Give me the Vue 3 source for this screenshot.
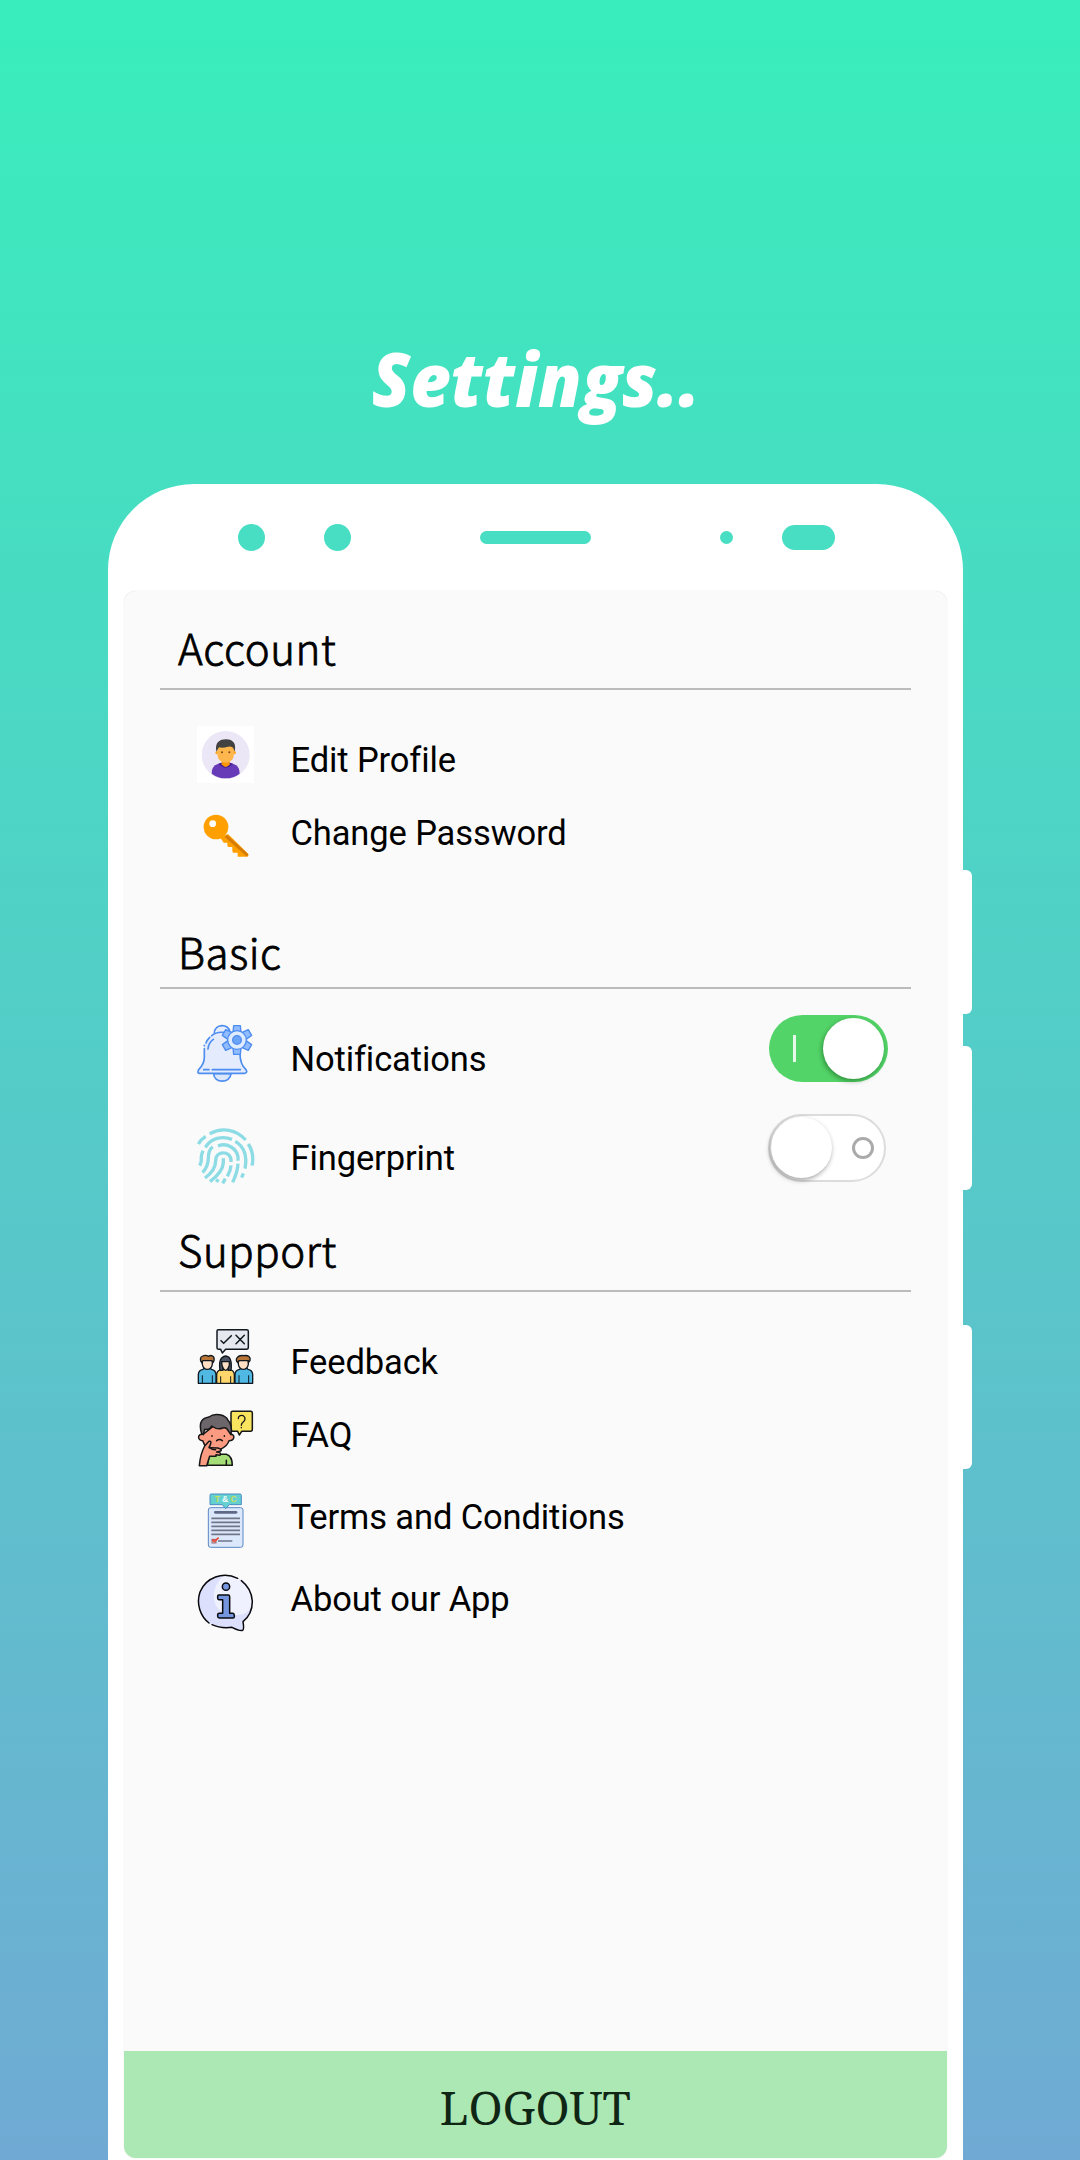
<script setup>
import { ref } from 'vue'

const notifications = ref(true)
const fingerprint = ref(false)
</script>

<template>
  <main class="page">
    <header class="title"><h1>Settings..</h1></header>
    <div class="phone">
      <i class="side-key key-one"></i>
      <i class="side-key key-two"></i>
      <i class="side-key key-three"></i>
      <div class="bezel">
        <i class="lens"></i>
        <i class="lens second"></i>
        <i class="speaker"></i>
        <i class="dot"></i>
        <i class="sensor"></i>
      </div>
      <div class="screen">
        <section class="account">
          <h2><span>Account</span></h2>
          <div class="row edit">
            <svg class="icon" viewBox="0 0 171 171">
              <rect width="171" height="171" fill="#fff" />
              <circle cx="86" cy="87" r="72" fill="#ece7f6" />
              <path d="M44 143C44 119 58 111 86 111S128 119 128 143Q110 157 86 157T44 143Z" fill="#673ab7" />
              <path d="M64 113Q86 137 108 113L100 110H72Z" fill="#4a2392" />
              <path d="M74 104H98V115Q86 131 74 115Z" fill="#ff9800" />
              <circle cx="60" cy="80" r="5" fill="#ffa726" />
              <circle cx="112" cy="80" r="5" fill="#ffa726" />
              <path d="M61 62Q86 48 111 62V84Q110 109 86 110Q62 109 61 84Z" fill="#ffb74d" />
              <path d="M58 77C53 49 68 40 87 40C109 40 119 54 113 77L109 67Q105 59 93 62Q77 67 66 64L61 72Z" fill="#424242" />
              <circle cx="75" cy="79" r="3" fill="#784719" />
              <circle cx="97" cy="79" r="3" fill="#784719" />
            </svg>
            <span class="label">Edit Profile</span>
          </div>
          <div class="row password">
            <svg class="icon" viewBox="0 0 171 171">
              <path d="M70 89L93 78L154 138V144L150 146H122V134H108L106 129V117H93L91 112V104H80Z" fill="#ffa000" />
              <path d="M83 87L90 80L154 139L150 146Z" fill="#d67c05" />
              <circle cx="57" cy="57" r="37" fill="#ffa000" />
              <circle cx="47" cy="47" r="10" fill="#fff" />
            </svg>
            <span class="label">Change Password</span>
          </div>
        </section>

        <section class="basic">
          <h2><span>Basic</span></h2>
          <div class="row notifications">
            <svg class="icon" viewBox="0 0 171 171" fill="none" stroke="#4d8df0" stroke-width="5" stroke-linecap="round" stroke-linejoin="round">
              <path d="M52 25C52-5 96-5 98 20" fill="#e6edfc" />
              <path d="M50 146C51 176 100 176 102 146Z" fill="#dce7fc" />
              <path d="M50 27Q24 38 22 70V96Q22 117 5 134Q-1 146 8 145H143Q153 143 147 134Q129 117 129 83L105 24Q73 15 50 27Z" fill="#e3ebfd" stroke="none" />
              <path d="M79 22Q58 20 44 32M38 37Q30 45 27 54M22 71V96Q22 117 5 134Q-1 146 8 145H143Q153 143 147 134Q129 117 129 86M22 61V62M33 72Q34 54 49 43M20 134H36M46 134H130" />
              <g stroke-width="4" fill="#91bcff">
                <path d="M108 22L110 2H130L132 22ZM108 68L110 88H130L132 68Z" />
                <path d="M108 22L110 0H130L132 22ZM108 68L110 90H130L132 68Z" transform="rotate(60 120 45)" />
                <path d="M108 22L110 0H130L132 22ZM108 68L110 90H130L132 68Z" transform="rotate(120 120 45)" />
                <circle cx="120" cy="45" r="28" fill="#dfebff" />
                <circle cx="120" cy="45" r="13" fill="#6aa5f7" />
              </g>
            </svg>
            <span class="label">Notifications</span>
            <button class="toggle" :class="{ on: notifications }" aria-label="Notifications" @click="notifications = !notifications">
              <i class="mark"></i><i class="knob"></i>
            </button>
          </div>
          <div class="row fingerprint">
            <svg class="icon" viewBox="0 0 171 171" fill="none" stroke="#8ddce5" stroke-width="10">
              <path d="M4 48Q12 34 26 25" />
              <path d="M38 17C75-3 118 4 146 36" />
              <path d="M154 48Q173 78 165 113" />
              <path d="M25 58C42 31 75 22 105 34" />
              <path d="M115 40C145 58 150 90 144 122" />
              <path d="M139 136L134 149" />
              <path d="M18 68Q11 84 13 96Q13 104 8 113" />
              <path d="M47 56Q34 67 34 90C34 110 29 120 17 134" />
              <path d="M63 54C92 42 119 63 123 86V98" />
              <path d="M123 107Q122 131 107 163" />
              <path d="M24 150Q56 126 56 98C56 67 102 67 102 97V102" />
              <path d="M39 161Q78 131 79 104V91" />
              <path d="M102 112Q101 128 91 145M85 152L77 166M64 154L58 162" />
            </svg>
            <span class="label">Fingerprint</span>
            <button class="toggle" :class="{ on: fingerprint }" aria-label="Fingerprint" @click="fingerprint = !fingerprint">
              <i class="mark"></i><i class="knob"></i>
            </button>
          </div>
        </section>

        <section class="support">
          <h2><span>Support</span></h2>
          <div class="row feedback">
            <svg class="icon" viewBox="0 0 171 171" fill="none" stroke="#101820" stroke-width="4.5" stroke-linecap="round" stroke-linejoin="round">
              <path d="M64 5H149Q154 5 154 10V58Q154 64 148 64H86L76 75L71 64H65Q60 64 60 59V9Q60 5 64 5Z" fill="#e6e8ef" />
              <path d="M72 38L80 46L103 23M117 22L142 47M142 22L117 47" />
              <g stroke-width="4">
                <path d="M4 166V139Q5 126 18 124L24 119H38L43 124Q56 126 57 139V166ZM114 166V139Q115 126 128 124L134 119H147L153 124Q166 126 167 139V166Z" fill="#4fb9e3" />
                <path d="M59 166V139Q60 127 74 124H97Q111 127 112 139V166Z" fill="#ffd66b" />
                <path d="M16 97H46V109Q43 124 31 124T16 109ZM124 97H154V109Q151 124 139 124T124 109Z" fill="#ffe0c5" />
                <path d="M14 104Q5 89 17 84Q26 80 35 85Q43 79 50 87Q54 96 48 104L45 98H18ZM123 104Q114 98 121 88Q127 81 139 83Q163 80 159 98L154 104V98H126Z" fill="#b77538" />
                <path d="M69 127Q63 87 86 84Q107 86 102 127H93V112L97 101H75L78 112V127Z" fill="#4c5362" />
                <path d="M74 101H97V112Q92 127 86 127T75 112Z" fill="#ffe0c5" />
                <path d="M16 143V165M46 143V165M126 143V165M155 143V165M71 146V165M101 146V165" stroke-width="3" />
              </g>
            </svg>
            <span class="label">Feedback</span>
          </div>
          <div class="row faq">
            <svg class="icon" viewBox="0 0 171 171" fill="none" stroke="#171717" stroke-width="4.5" stroke-linecap="round" stroke-linejoin="round">
              <path d="M107 4H161Q166 4 166 9V58Q166 64 161 64H134L127 75L122 64H107Q102 64 102 58V9Q102 4 107 4Z" fill="#f8e45f" />
              <path d="M124 26C123 13 145 13 144 27C144 37 133 35 133 46M133 52V53" stroke-width="4" />
              <path d="M37 134Q43 131 51 133H88Q106 139 106 166H31Z" fill="#a5de78" />
              <path d="M18 73C1 70 0 92 17 92L25 110L70 118Q92 108 96 92C114 92 115 72 101 73L96 50L50 48Z" fill="#fb9c82" />
              <path d="M14 71C2 32 19 24 36 21C53 7 86 14 93 31Q107 45 102 74L94 63Q89 50 77 54Q62 61 44 48Q39 60 23 58L19 74Z" fill="#6c666b" />
              <path d="M45 77V79M82 77V79M59 92Q67 85 76 92" />
              <path d="M7 167Q10 132 23 108L36 94Q45 92 40 104L36 113L63 114Q79 119 69 124L59 126Q75 127 69 136L57 134V139L38 139L29 167Z" fill="#fb9c82" />
              <path d="M88 151V165M39 113Q46 120 56 119" />
            </svg>
            <span class="label">FAQ</span>
          </div>
          <div class="row terms">
            <svg class="icon" viewBox="0 0 171 171">
              <rect x="34" y="47" width="104" height="119" rx="7" fill="#dbe8fb" stroke="#5b87c5" stroke-width="3" />
              <path d="M42 6H129Q133 6 133 10V38H97L86 50L76 38H39V10Q39 6 42 6Z" fill="#65d0cf" stroke="#4a8bc6" stroke-width="3" />
              <text x="86" y="31" text-anchor="middle" font-family="Liberation Sans, sans-serif" font-weight="700" font-size="26" textLength="66"><tspan fill="#c7df5c">T</tspan><tspan fill="#f5fcff">&amp;</tspan><tspan fill="#c7df5c">C</tspan></text>
              <path d="M55 61H117" stroke="#626887" stroke-width="8" stroke-linecap="round" />
              <path d="M43 79H129M43 91H129M43 103H129M43 115H129M43 127H129M63 147H106" stroke="#707589" stroke-width="5" />
              <rect x="45" y="142" width="12" height="11" fill="#ddd" stroke="#926578" stroke-width="3" />
              <path d="M46 142L52 149L65 137" fill="none" stroke="#ec4632" stroke-width="5" />
            </svg>
            <span class="label">Terms and Conditions</span>
          </div>
          <div class="row about">
            <svg class="icon" viewBox="0 0 171 171" fill="none" stroke="#09090d" stroke-width="4.5" stroke-linecap="round" stroke-linejoin="round">
              <path d="M49 154Q70 164 105 160Q128 172 139 169L139 142Q166 119 166 82C164 35 127 4 84 4C36 4 3 41 4 85Q5 124 35 146Z" fill="#dce0fc" stroke="none" />
              <path d="M81 5C124 0 166 40 166 81Q162 113 138 121Q106 127 80 115C41 100 40 35 81 5Z" fill="#eff1ff" stroke="none" />
              <path d="M122 13C78-8 27 10 9 54C-3 90 10 127 36 147M45 152Q70 164 105 160Q128 172 137 169Q142 166 138 143Q166 121 166 82Q164 44 133 20" />
              <circle cx="87" cy="38" r="11" fill="#7596df" />
              <path d="M65 63H94Q98 63 98 68V118H108Q112 119 112 125V128Q112 132 108 132H67Q62 132 62 127V122Q62 118 67 118H77V77H66Q62 77 62 72V67Q62 63 65 63Z" fill="#7596df" />
            </svg>
            <span class="label">About our App</span>
          </div>
        </section>
        <button class="logout"><span>LOGOUT</span></button>
      </div>
    </div>
  </main>
</template>

<style>
body { margin: 0; }
</style>

<style scoped>
.page {
  box-sizing: border-box;
  width: 1080px;
  height: 2160px;
  overflow: hidden;
  background: linear-gradient(#39eebc, #70aad4);
  font-family: Roboto, sans-serif;
  color: #000;
}
.title {
  height: 484px;
  box-sizing: border-box;
  padding: 330px 9px 0 0;
  display: flex;
  justify-content: center;
}
h1 {
  margin: 0;
  height: 98px;
  font: italic 800 74px/98px "Open Sans", sans-serif;
  color: #fff;
  white-space: nowrap;
  transform: scaleX(0.95);
}
.phone {
  position: relative;
  box-sizing: border-box;
  width: 855px;
  height: 1676px;
  margin-left: 108px;
  padding: 0 16px 0 15.5px;
  background: #fff;
  border-radius: 86px 86px 0 0;
}
.side-key {
  position: absolute;
  left: 854px;
  width: 10px;
  height: 144px;
  background: #fff;
  border-radius: 0 6px 6px 0;
}
.key-one { top: 386px; }
.key-two { top: 562px; }
.key-three { top: 841px; }
.bezel {
  height: 107px;
  display: flex;
  align-items: center;
  padding-left: 114px;
}
.bezel i {
  flex: none;
  background: #47dec3;
  border-radius: 20px;
}
.lens { width: 27.5px; height: 27.5px; }
.lens.second { margin-left: 58.5px; }
.speaker { width: 111px; height: 12.5px; margin-left: 129px; }
.dot { width: 13px; height: 13px; margin-left: 129px; }
.bezel .sensor { width: 53px; height: 25.5px; margin-left: 49px; border-radius: 13px; }
.screen {
  height: 1567px;
  display: flex;
  flex-direction: column;
  background: #fafafa;
  border-radius: 12px;
  overflow: hidden;
  box-shadow: 0 0 1px #ccc;
}
section { flex: none; padding: 0 36.5px; }
.account { height: 315px; }
.basic { height: 299px; }
.support { height: 440px; }
h2 {
  box-sizing: border-box;
  height: 99px;
  margin: 0;
  padding-left: 18px;
  border-bottom: 2px solid #bbb;
  display: flex;
  align-items: flex-end;
  font: 300 42px/60px "Noto Sans CJK JP", "Noto Sans", sans-serif;
  letter-spacing: 0.6px;
  -webkit-text-stroke: 0.8px #000;
}
h2 span { margin-bottom: 11px; }
.basic h2 { height: 83px; }
.basic h2 span { margin-bottom: 6px; }
.support h2 { height: 87px; }
.row {
  display: flex;
  align-items: flex-start;
  height: 57px;
  padding-left: 36.5px;
}
.icon { flex: none; width: 57px; height: 57px; overflow: visible; }
.label {
  margin-left: 37px;
  font-size: 34.5px;
  line-height: 40px;
  letter-spacing: -0.12px;
  font-variant-ligatures: common-ligatures;
  white-space: nowrap;
}
.edit { margin-top: 36px; }
.edit .label { margin-top: 14px; }
.password { margin-top: 25px; }
.password .label { margin-top: 5px; }
.notifications { margin-top: 36px; }
.notifications .label { margin-top: 14px; }
.fingerprint { margin-top: 46px; }
.fingerprint .label { margin-top: 10px; }
.feedback { margin-top: 36px; }
.feedback .label { margin-top: 14px; }
.faq { margin-top: 24.5px; }
.faq .label { margin-top: 5.5px; }
.terms { margin-top: 25.5px; }
.terms .label { margin-top: 5px; }
.about { margin-top: 25px; }
.about .label { margin-top: 5px; }
.toggle {
  position: relative;
  box-sizing: border-box;
  width: 118.5px;
  height: 68px;
  margin: -14px 24.5px 0 auto;
  padding: 0;
  border: 2.5px solid #dcdcdc;
  border-radius: 34px;
  background: #fff;
}
.toggle .knob {
  position: absolute;
  width: 61px;
  height: 61px;
  border-radius: 50%;
  background: #fff;
  left: 1px;
  top: 1px;
  box-shadow: -1px 2px 5px rgba(0, 0, 0, 0.38);
}
.toggle .mark {
  position: absolute;
  box-sizing: border-box;
  width: 22px;
  height: 22px;
  right: 10.5px;
  top: 20.5px;
  border: 3px solid #aaa;
  border-radius: 50%;
}
.toggle.on {
  height: 67px;
  margin: -10px 23px 0 auto;
  background: #53d468;
  border: 0;
}
.toggle.on .knob { left: 54px; top: 3px; box-shadow: -1px 2px 5px rgba(0, 55, 0, 0.45); }
.toggle.on .mark {
  width: 3px;
  height: 27px;
  left: 23.5px;
  top: 20px;
  border: 0;
  border-radius: 0;
  background: #e5f9e8;
}
.logout {
  flex: none;
  height: 107px;
  margin-top: auto;
  padding: 6px 0 0;
  border: 0;
  background: #abe8b3;
  color: #102615;
  font: 46px/101px "Noto Serif", "Liberation Serif", serif;
}
</style>
